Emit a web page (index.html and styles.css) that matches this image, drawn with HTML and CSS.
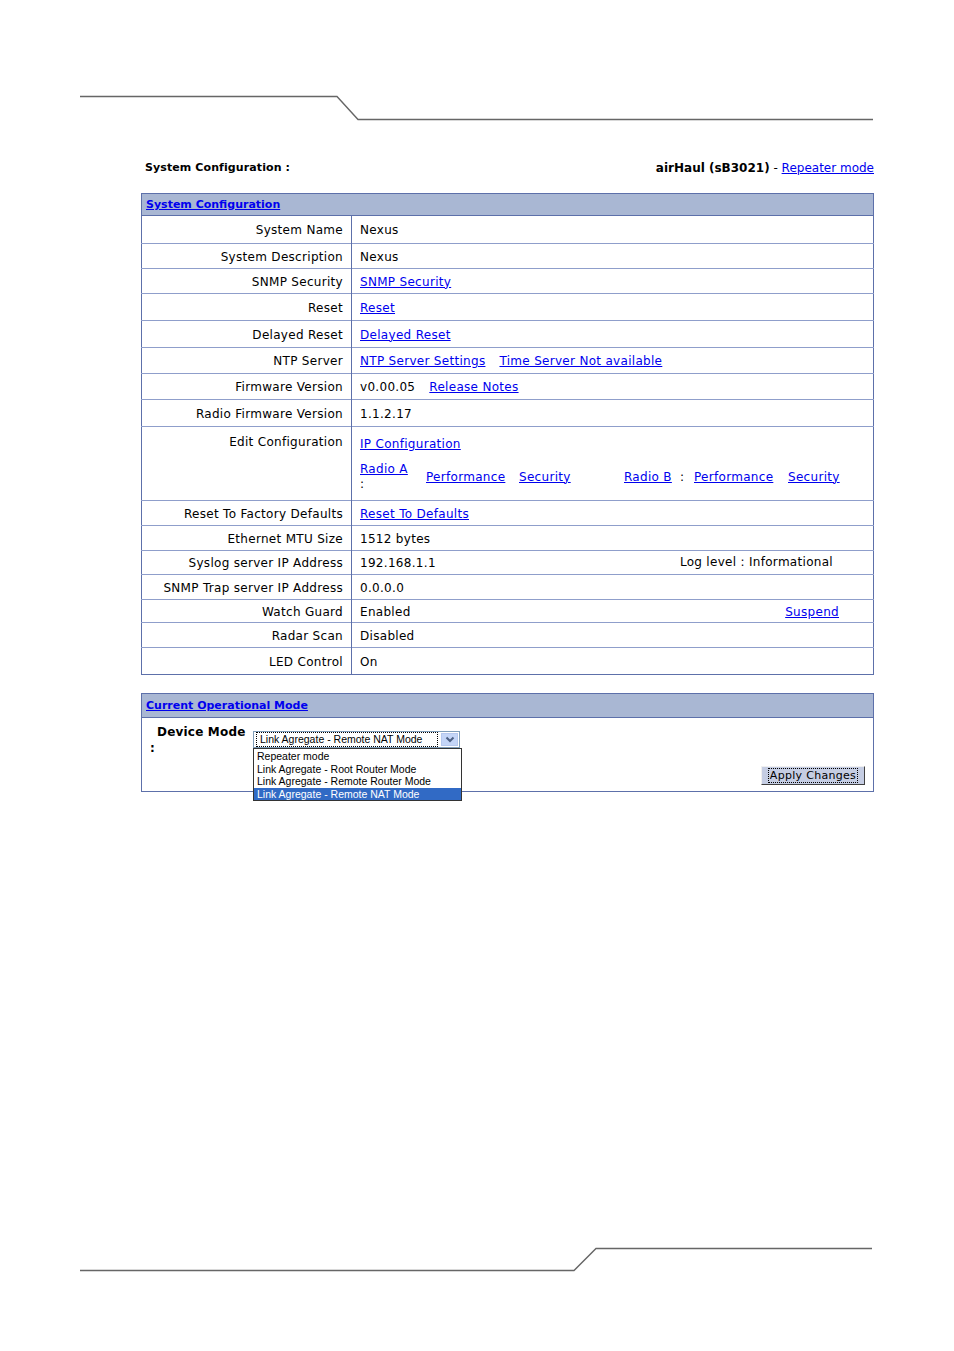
FILE: index.html
```html
<!DOCTYPE html>
<html lang="en">

<head>
  <meta charset="UTF-8">
  <meta name="viewport" content="width=device-width, initial-scale=1.0">
  <title>System Configuration</title>
  <link rel="stylesheet" href="styles.css">
</head>

<body>
  <div class="page">
    <svg class="rule" width="954" height="130" viewBox="0 0 954 130">
      <polyline points="80,96.5 337,96.5 358,119.5 873,119.5" />
    </svg>

    <div class="content">
      <div class="title-row">
        <span class="page-title">System Configuration :</span>
        <span class="device"><b>airHaul (sB3021)</b> - <a href="#">Repeater mode</a></span>
      </div>

      <table class="config">
        <colgroup>
          <col class="col-label">
          <col>
        </colgroup>
        <tr>
          <th colspan="2"><a href="#">System Configuration</a></th>
        </tr>
        <tr class="h28">
          <td class="label">System Name</td>
          <td class="value">Nexus</td>
        </tr>
        <tr>
          <td class="label">System Description</td>
          <td class="value">Nexus</td>
        </tr>
        <tr>
          <td class="label">SNMP Security</td>
          <td class="value"><a href="#">SNMP Security</a></td>
        </tr>
        <tr class="h27">
          <td class="label">Reset</td>
          <td class="value"><a href="#">Reset</a></td>
        </tr>
        <tr class="h27">
          <td class="label">Delayed Reset</td>
          <td class="value"><a href="#">Delayed Reset</a></td>
        </tr>
        <tr class="h26">
          <td class="label">NTP Server</td>
          <td class="value"><a href="#">NTP Server Settings</a><a class="gap" href="#">Time Server Not available</a></td>
        </tr>
        <tr class="h26">
          <td class="label">Firmware Version</td>
          <td class="value">v0.00.05<a class="gap-wide" href="#">Release Notes</a></td>
        </tr>
        <tr class="h27">
          <td class="label">Radio Firmware Version</td>
          <td class="value">1.1.2.17</td>
        </tr>
        <tr class="edit-row">
          <td class="label">Edit Configuration</td>
          <td class="value">
            <div class="edit-links">
              <a href="#">IP Configuration</a>
              <div class="radio-row">
                <div class="cell w66"><a href="#">Radio A</a><br>:</div>
                <div class="cell w93"><a href="#">Performance</a></div>
                <div class="cell w105"><a href="#">Security</a></div>
                <div class="cell w70"><a href="#">Radio B</a> &nbsp;:</div>
                <div class="cell w94"><a href="#">Performance</a></div>
                <div class="cell"><a href="#">Security</a></div>
              </div>
            </div>
          </td>
        </tr>
        <tr>
          <td class="label">Reset To Factory Defaults</td>
          <td class="value"><a href="#">Reset To Defaults</a></td>
        </tr>
        <tr>
          <td class="label">Ethernet MTU Size</td>
          <td class="value">1512 bytes</td>
        </tr>
        <tr class="h24">
          <td class="label">Syslog server IP Address</td>
          <td class="value"><div class="split"><span>192.168.1.1</span><span class="log-level">Log level : Informational</span></div></td>
        </tr>
        <tr>
          <td class="label">SNMP Trap server IP Address</td>
          <td class="value">0.0.0.0</td>
        </tr>
        <tr class="h23">
          <td class="label">Watch Guard</td>
          <td class="value"><div class="split"><span>Enabled</span><a class="suspend" href="#">Suspend</a></div></td>
        </tr>
        <tr>
          <td class="label">Radar Scan</td>
          <td class="value">Disabled</td>
        </tr>
        <tr class="h27">
          <td class="label">LED Control</td>
          <td class="value">On</td>
        </tr>
      </table>

      <div class="mode-box">
        <div class="mode-head"><a href="#">Current Operational Mode</a></div>
        <div class="mode-body">
          <div class="mode-label"><span class="indent">Device Mode</span><br>:</div>
          <div class="select">
            <div class="select-text"><span>Link Agregate - Remote NAT Mode</span></div>
            <div class="select-btn">
              <svg width="10" height="7" viewBox="0 0 10 7">
                <polyline points="1.5,1.5 5,5 8.5,1.5" />
              </svg>
            </div>
            <ul class="select-list">
              <li>Repeater mode</li>
              <li>Link Agregate - Root Router Mode</li>
              <li>Link Agregate - Remote Router Mode</li>
              <li class="selected">Link Agregate - Remote NAT Mode</li>
            </ul>
          </div>
          <button class="apply"><span>Apply Changes</span></button>
        </div>
      </div>
    </div>

    <svg class="rule bottom" width="954" height="111" viewBox="0 0 954 111">
      <polyline points="80,30.5 574,30.5 596,8.5 872,8.5" />
    </svg>
  </div>
</body>

</html>
```

FILE: styles.css
```css
body {
  margin: 0;
  background: #ffffff;
  font-family: "DejaVu Sans", Verdana, sans-serif;
  font-size: 12px;
  color: #000000;
}

a {
  color: #0000ee;
  text-decoration: underline;
}

.page {
  width: 954px;
  height: 1351px;
  display: flex;
  flex-direction: column;
  overflow: hidden;
}

.rule {
  display: block;
  flex-shrink: 0;
}

.rule polyline {
  fill: none;
  stroke: #666666;
  stroke-width: 1.4;
}

.rule.bottom {
  margin-top: auto;
}

.content {
  width: 733px;
  margin-left: 141px;
}

/* title line above the table */
.title-row {
  display: flex;
  justify-content: space-between;
  align-items: center;
  margin-top: 30px;
  padding-left: 4px;
  line-height: 16px;
}

.page-title {
  font-weight: bold;
  font-size: 11px;
  letter-spacing: 0.1px;
}

.device {
  font-size: 12px;
}

/* main table */
.config {
  width: 733px;
  margin-top: 17px;
  border-collapse: collapse;
  table-layout: fixed;
  border: 1px solid #5d70aa;
  letter-spacing: 0.3px;
}

.col-label {
  width: 210px;
}

.config th {
  background: #a9b7d3;
  text-align: left;
  font-size: 11px;
  letter-spacing: 0;
  padding: 3px 4px;
  line-height: 15px;
  border-bottom: 1px solid #5d70aa;
}

.config td {
  height: 22px;
  padding: 2px 8px 0;
  line-height: 15px;
  border-top: 1px solid #8f9ecb;
  white-space: nowrap;
}

.config tr.h28 td { height: 25px; }
.config tr.h27 td { height: 24px; }
.config tr.h26 td { height: 23px; }
.config tr.h24 td { height: 21px; }
.config tr.h23 td { height: 20px; }

.config td.label {
  text-align: right;
  border-right: 1px solid #5d70aa;
}

.gap {
  margin-left: 14px;
}

.gap-wide {
  margin-left: 14px;
}

.split {
  display: flex;
  justify-content: space-between;
  align-items: center;
}

.log-level {
  margin-right: 32px;
  margin-top: -2px;
}

.suspend {
  margin-right: 26px;
}

.edit-row td.label {
  vertical-align: top;
  padding-top: 8px;
}

.edit-row td.value {
  height: 55px;
  padding-top: 10px;
  padding-bottom: 8px;
}

.edit-links {
  display: flex;
  flex-direction: column;
  align-items: flex-start;
  gap: 10px;
}

.radio-row {
  display: flex;
  align-items: center;
}

.radio-row .cell {
  flex-shrink: 0;
}

.w66 { width: 66px; }
.w93 { width: 93px; }
.w105 { width: 105px; }
.w70 { width: 70px; }
.w94 { width: 94px; }

/* operational mode box */
.mode-box {
  margin-top: 18px;
  border: 1px solid #5d70aa;
}

.mode-head {
  background: #a9b7d3;
  border-bottom: 1px solid #5d70aa;
  font-weight: bold;
  font-size: 11px;
  padding: 4px 4px;
  line-height: 15px;
}

.mode-body {
  display: flex;
  height: 73px;
}

.mode-label {
  width: 103px;
  padding: 6px 0 0 8px;
  line-height: 16px;
  font-weight: bold;
  font-size: 12px;
  letter-spacing: 0.2px;
}

.mode-label .indent {
  margin-left: 7px;
}

.select {
  position: relative;
  width: 205px;
  height: 15px;
  margin-top: 13px;
  border: 1px solid #7f9db9;
  display: flex;
  align-items: center;
  font-family: "Liberation Sans", Arial, sans-serif;
  font-size: 10.5px;
}

.select-text {
  flex: 1;
  height: 13px;
  margin-left: 2px;
  border: 1px dotted #000000;
  line-height: 13px;
  padding-left: 3px;
  overflow: hidden;
  white-space: nowrap;
}

.select-btn {
  width: 17px;
  height: 13px;
  margin: 0 1px 0 3px;
  background: #c4d5f7;
  border: 1px solid #b6c8ee;
  box-sizing: border-box;
  display: flex;
  align-items: center;
  justify-content: center;
}

.select-btn polyline {
  fill: none;
  stroke: #4d6185;
  stroke-width: 2;
}

.select-list {
  position: absolute;
  top: 16px;
  left: -1px;
  width: 207px;
  margin: 0;
  padding: 1px 0 0 0;
  list-style: none;
  background: #ffffff;
  border: 1px solid #333333;
  z-index: 5;
}

.select-list li {
  line-height: 12.5px;
  padding-left: 3px;
  white-space: nowrap;
}

.select-list li.selected {
  background: #316ac5;
  color: #ffffff;
}

.apply {
  align-self: flex-end;
  margin: 0 8px 6px auto;
  width: 104px;
  height: 19px;
  padding: 0;
  background: #c5cde3;
  border: 1px solid;
  border-color: #f0f0f0 #404040 #404040 #f0f0f0;
  font-family: "DejaVu Sans", Verdana, sans-serif;
  font-size: 11px;
  color: #000000;
  display: flex;
  align-items: center;
  justify-content: center;
}

.apply span {
  border: 1px dotted #000000;
  padding: 0 1px;
  line-height: 13px;
  letter-spacing: 0.3px;
}
```
